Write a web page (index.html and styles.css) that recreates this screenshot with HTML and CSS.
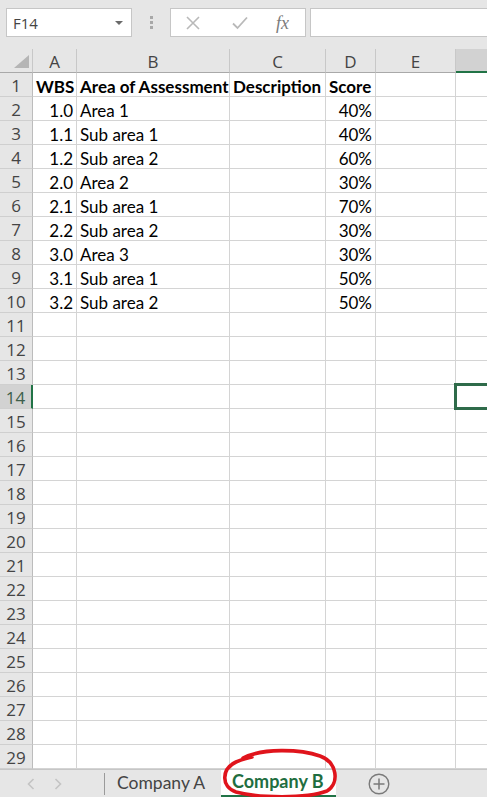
FILE: index.html
```html
<!DOCTYPE html>
<html>
<head>
<meta charset="utf-8">
<link rel="stylesheet" href="styles.css">
</head>
<body>
<div class="app">
  <div class="toolbar">
    <div class="namebox"><span class="nb-text">F14</span><span class="nb-arrow"></span></div>
    <div class="dots"><i></i><i></i><i></i></div>
    <div class="fbuttons">
      <svg class="ic-x" width="14" height="14" viewBox="0 0 14 14"><path d="M1 1L13 13M13 1L1 13" stroke="#b9b9b9" stroke-width="1.6" fill="none"/></svg>
      <svg class="ic-ok" width="16" height="14" viewBox="0 0 16 14"><path d="M1 7.5L5.5 12L15 1.5" stroke="#b9b9b9" stroke-width="1.8" fill="none"/></svg>
      <span class="fx">fx</span>
    </div>
    <div class="finput"></div>
  </div>

  <div class="sheet">
    <div class="ch corner"><svg width="16" height="14" viewBox="0 0 16 14"><path d="M15 0V13H0Z" fill="#b5b5b5"/></svg></div>
    <div class="ch">A</div><div class="ch">B</div><div class="ch">C</div><div class="ch">D</div><div class="ch">E</div><div class="ch chsel"></div>

    <div class="rh">1</div><div class="c bold">WBS</div><div class="c bold">Area of Assessment</div><div class="c bold">Description</div><div class="c bold">Score</div><div class="c"></div><div class="c"></div>
    <div class="rh">2</div><div class="c r">1.0</div><div class="c">Area 1</div><div class="c"></div><div class="c r">40%</div><div class="c"></div><div class="c"></div>
    <div class="rh">3</div><div class="c r">1.1</div><div class="c">Sub area 1</div><div class="c"></div><div class="c r">40%</div><div class="c"></div><div class="c"></div>
    <div class="rh">4</div><div class="c r">1.2</div><div class="c">Sub area 2</div><div class="c"></div><div class="c r">60%</div><div class="c"></div><div class="c"></div>
    <div class="rh">5</div><div class="c r">2.0</div><div class="c">Area 2</div><div class="c"></div><div class="c r">30%</div><div class="c"></div><div class="c"></div>
    <div class="rh">6</div><div class="c r">2.1</div><div class="c">Sub area 1</div><div class="c"></div><div class="c r">70%</div><div class="c"></div><div class="c"></div>
    <div class="rh">7</div><div class="c r">2.2</div><div class="c">Sub area 2</div><div class="c"></div><div class="c r">30%</div><div class="c"></div><div class="c"></div>
    <div class="rh">8</div><div class="c r">3.0</div><div class="c">Area 3</div><div class="c"></div><div class="c r">30%</div><div class="c"></div><div class="c"></div>
    <div class="rh">9</div><div class="c r">3.1</div><div class="c">Sub area 1</div><div class="c"></div><div class="c r">50%</div><div class="c"></div><div class="c"></div>
    <div class="rh">10</div><div class="c r">3.2</div><div class="c">Sub area 2</div><div class="c"></div><div class="c r">50%</div><div class="c"></div><div class="c"></div>
    <div class="rh">11</div><div class="c"></div><div class="c"></div><div class="c"></div><div class="c"></div><div class="c"></div><div class="c"></div>
    <div class="rh">12</div><div class="c"></div><div class="c"></div><div class="c"></div><div class="c"></div><div class="c"></div><div class="c"></div>
    <div class="rh">13</div><div class="c"></div><div class="c"></div><div class="c"></div><div class="c"></div><div class="c"></div><div class="c"></div>
    <div class="rh rhsel">14</div><div class="c"></div><div class="c"></div><div class="c"></div><div class="c"></div><div class="c"></div><div class="c sel"></div>
    <div class="rh">15</div><div class="c"></div><div class="c"></div><div class="c"></div><div class="c"></div><div class="c"></div><div class="c"></div>
    <div class="rh">16</div><div class="c"></div><div class="c"></div><div class="c"></div><div class="c"></div><div class="c"></div><div class="c"></div>
    <div class="rh">17</div><div class="c"></div><div class="c"></div><div class="c"></div><div class="c"></div><div class="c"></div><div class="c"></div>
    <div class="rh">18</div><div class="c"></div><div class="c"></div><div class="c"></div><div class="c"></div><div class="c"></div><div class="c"></div>
    <div class="rh">19</div><div class="c"></div><div class="c"></div><div class="c"></div><div class="c"></div><div class="c"></div><div class="c"></div>
    <div class="rh">20</div><div class="c"></div><div class="c"></div><div class="c"></div><div class="c"></div><div class="c"></div><div class="c"></div>
    <div class="rh">21</div><div class="c"></div><div class="c"></div><div class="c"></div><div class="c"></div><div class="c"></div><div class="c"></div>
    <div class="rh">22</div><div class="c"></div><div class="c"></div><div class="c"></div><div class="c"></div><div class="c"></div><div class="c"></div>
    <div class="rh">23</div><div class="c"></div><div class="c"></div><div class="c"></div><div class="c"></div><div class="c"></div><div class="c"></div>
    <div class="rh">24</div><div class="c"></div><div class="c"></div><div class="c"></div><div class="c"></div><div class="c"></div><div class="c"></div>
    <div class="rh">25</div><div class="c"></div><div class="c"></div><div class="c"></div><div class="c"></div><div class="c"></div><div class="c"></div>
    <div class="rh">26</div><div class="c"></div><div class="c"></div><div class="c"></div><div class="c"></div><div class="c"></div><div class="c"></div>
    <div class="rh">27</div><div class="c"></div><div class="c"></div><div class="c"></div><div class="c"></div><div class="c"></div><div class="c"></div>
    <div class="rh">28</div><div class="c"></div><div class="c"></div><div class="c"></div><div class="c"></div><div class="c"></div><div class="c"></div>
    <div class="rh">29</div><div class="c"></div><div class="c"></div><div class="c"></div><div class="c"></div><div class="c"></div><div class="c"></div>
  </div>

  <div class="tabs">
    <div class="nav">
      <svg width="8" height="12" viewBox="0 0 8 12"><path d="M6.5 1L1.5 6L6.5 11" stroke="#c4c4c4" stroke-width="1.6" fill="none"/></svg>
      <svg width="8" height="12" viewBox="0 0 8 12"><path d="M1.5 1L6.5 6L1.5 11" stroke="#c4c4c4" stroke-width="1.6" fill="none"/></svg>
    </div>
    <div class="sep"></div>
    <div class="tab">Company A</div>
    <div class="tab active">Company B</div>
    <div class="add">
      <svg width="22" height="22" viewBox="0 0 22 22"><circle cx="11" cy="11" r="9.8" stroke="#7a7a7a" stroke-width="1.4" fill="none"/><path d="M11 5.5V16.5M5.5 11H16.5" stroke="#7a7a7a" stroke-width="1.5"/></svg>
    </div>
  </div>

  <svg class="scribble" width="487" height="797" viewBox="0 0 487 797">
    <path d="M243 758 C262 748 300 749 320 756 C337 762 340 783 327 791 C306 799 258 798 236 792 C221 787 221 769 236 762 C241 760 246 758 252 757" stroke="#e0141c" stroke-width="3.6" fill="none" stroke-linecap="round"/>
  </svg>
</div>
</body>
</html>
```

FILE: styles.css
```css
* { box-sizing: border-box; }
html, body { margin: 0; padding: 0; }
body {
  width: 487px;
  height: 797px;
  overflow: hidden;
  background: #ffffff;
  font-family: "Open Sans", "Liberation Sans", sans-serif;
}
.app {
  position: relative;
  width: 487px;
  height: 797px;
  display: flex;
  flex-direction: column;
  overflow: hidden;
}

/* toolbar */
.toolbar {
  height: 49px;
  flex: none;
  background: #e6e6e6;
  display: flex;
  align-items: flex-start;
  padding: 8px 0 0 6px;
}
.toolbar > * { flex: none; }
.namebox {
  width: 126px;
  height: 29px;
  background: #fff;
  border: 1px solid #c6c6c6;
  display: flex;
  align-items: center;
  justify-content: space-between;
  padding: 0 8px 0 6px;
}
.nb-text {
  font-size: 15px;
  color: #444;
}
.nb-arrow {
  width: 0; height: 0;
  border-left: 4px solid transparent;
  border-right: 4px solid transparent;
  border-top: 4px solid #6a6a6a;
}
.dots {
  width: 38px;
  height: 29px;
  display: flex;
  flex-direction: column;
  align-items: center;
  justify-content: center;
  gap: 2px;
}
.dots i {
  display: block;
  width: 3px;
  height: 3px;
  background: #a8a8a8;
}
.fbuttons {
  width: 136px;
  height: 29px;
  background: #fff;
  border: 1px solid #c6c6c6;
  display: flex;
  align-items: center;
  padding-left: 15px;
}
.ic-x { margin-right: 32px; }
.ic-ok { margin-right: 28px; }
.fx {
  font-family: "Liberation Serif", serif;
  font-style: italic;
  font-size: 18px;
  color: #7b7b7b;
  line-height: 1;
}
.finput {
  margin-left: 4px;
  width: 190px;
  height: 29px;
  background: #fff;
  border: 1px solid #c6c6c6;
}

/* sheet grid */
.sheet {
  flex: none;
  display: grid;
  grid-template-columns: 33px 44px 153px 96px 50px 80px 40px;
  grid-auto-rows: 24px;
  width: 496px;
}
.ch {
  background: #e6e6e6;
  border-right: 1px solid #c8c8c8;
  border-bottom: 1px solid #a9a9a9;
  font-size: 17px;
  color: #444;
  text-align: center;
  line-height: 23px;
  padding-top: 1px;
}
.corner {
  display: flex;
  align-items: flex-end;
  justify-content: flex-end;
  padding: 0 2px 3px 0;
}
.corner svg { display: block; }
.chsel {
  background: #d2d2d2;
  border-bottom: 2px solid #217346;
}
.rh {
  background: #e6e6e6;
  border-right: 1px solid #bcbcbc;
  border-bottom: 1px solid #cfcfcf;
  font-size: 17px;
  color: #444;
  text-align: center;
  line-height: 23px;
  padding-top: 1px;
}
.rhsel {
  background: #d2d2d2;
  border-right: 2px solid #217346;
  color: #3d5e4b;
}
.c {
  border-right: 1px solid #d4d4d4;
  border-bottom: 1px solid #d4d4d4;
  font-family: "Lato", "Liberation Sans", sans-serif;
  font-size: 17px;
  color: #000;
  line-height: 23px;
  padding: 2px 3px 0 3px;
  white-space: nowrap;
  overflow: visible;
}
.bold { font-weight: 700; }
.r { text-align: right; }
.sel { position: relative; }
.sel::after {
  content: "";
  position: absolute;
  left: -2px;
  top: -2px;
  right: -3px;
  bottom: -2px;
  border: 3px solid #2f6b4a;
}

/* tabs */
.tabs {
  flex: 1;
  background: #e6e6e6;
  border-top: 1px solid #c6c6c6;
  display: flex;
  align-items: stretch;
  font-family: "Lato", "Liberation Sans", sans-serif;
  font-size: 17.5px;
}
.nav {
  width: 104px;
  display: flex;
  align-items: center;
  padding-left: 27px;
  padding-bottom: 2px;
  gap: 19px;
}
.nav svg { display: block; }
.sep {
  width: 1px;
  background: #9a9a9a;
  margin: 3px 0 4px 0;
}
.tab {
  display: flex;
  align-items: center;
  padding: 0 14px 5px 12px;
  color: #444;
  width: 116px;
}
.tab.active {
  width: 115px;
  padding: 0 0 3px 11px;
  background: #ffffff;
  color: #1f6e40;
  font-weight: 700;
  font-size: 18px;
  border-bottom: 2px solid #217346;
  margin-bottom: 2px;
}
.add {
  display: flex;
  align-items: center;
  padding-left: 32px;
  padding-bottom: 2px;
}
.add svg { display: block; }

.scribble {
  position: absolute;
  left: 0;
  top: 0;
  pointer-events: none;
}
```
